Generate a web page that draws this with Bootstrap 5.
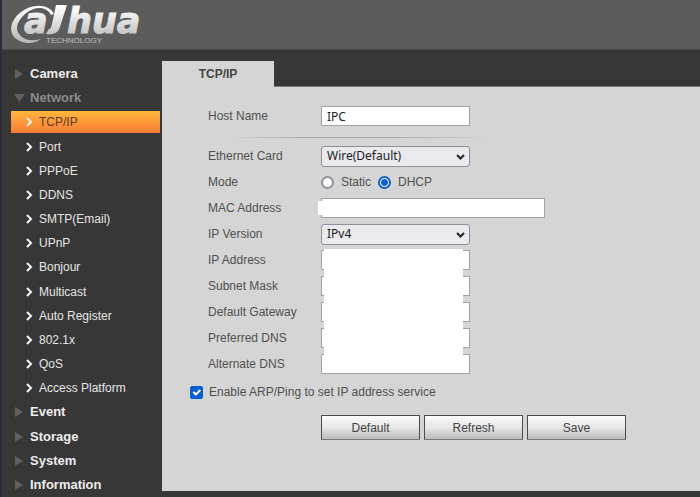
<!DOCTYPE html>
<html lang="en">
<head>
<meta charset="utf-8">
<meta name="viewport" content="width=device-width, initial-scale=1">
<title>TCP/IP</title>
<link href="https://cdn.jsdelivr.net/npm/bootstrap@5.3.0/dist/css/bootstrap.min.css" rel="stylesheet">
<style>
body{font-family:"Liberation Sans",Arial,sans-serif;font-size:12px;line-height:16px;color:#505050;background:#373737;border-left:2px solid #292d38}
.topbar{background:#5c5c5c;border-bottom:1px solid #484848;height:50px}
.brand-logo{width:138px;height:48px;margin-left:6px}
.side-menu{width:160px;padding:12px 2px 0 9px;display:grid;grid-auto-rows:1fr}
.side-menu a{display:flex;align-items:center;text-decoration:none;color:#e6e6e6;white-space:nowrap}
.side-menu .main-item{font-size:13px;font-weight:bold;padding-left:3px;gap:5px;color:#ededed}
.side-menu .main-item svg{width:11px;height:10px;flex:none}
.side-menu .open-item{color:#8b8b8b}
.side-menu .sub-item{padding-left:15px;gap:6px;margin:1px 0}
.side-menu .sub-item svg{width:7px;height:10px;flex:none;fill:none;stroke:#f4f4f4;stroke-width:2}
.side-menu .current-item{background:linear-gradient(#fdb73c,#fd9a39 50%,#fb7a33);color:#5b3a1c}
.tab-strip{padding-top:11px}
.page-tab{width:112px;height:25px;background:#d5d5d5;color:#444;font-weight:bold;border:0;padding:0}
.panel{background:linear-gradient(90deg,#d5d5d5 112px,#777 112px) top/100% 1px no-repeat #d5d5d5;margin-bottom:6px;padding:17px 0 0 28px}
.field-row{display:grid;grid-template-columns:113px 1fr;align-items:center;height:26px;padding-left:18px}
.field-row .form-control,.field-row .form-select{width:149px;height:20px;min-height:0;border-radius:0;border:1px solid #a2a2a2;font:12px/16px "Noto Sans",sans-serif;color:#222;padding:0 5px;background-color:#fff}
.field-row .form-select{height:21px;border-radius:3px;border-color:#8f8f9b;background-color:#e9e9ee;background-image:none;padding-right:20px}
.select-box svg{position:absolute;left:135px;top:8px;width:9px;height:6px;fill:none;stroke:#222;stroke-width:2;pointer-events:none}
.field-row .wide-field{width:224px}
.divider{height:1px;margin:8px 0 5px 42px;width:260px;background:linear-gradient(90deg,#d5d5d5,#aaa 25%,#aaa 65%,#d5d5d5)}
.mask-mac,.mask-ip{position:absolute;background:#fff}
.mask-mac{left:128px;top:6px;width:220px;height:14px}
.mask-ip{left:134px;top:2px;width:139px;bottom:4px}
.form-check-input{width:13px;height:13px;margin:0;flex:none}
.form-check-input:checked{background-color:#0a5fd0;border-color:#0a5fd0}
.form-check-input[type=radio]{border:2px solid #8f8f9b}
.form-check-input[type=radio]:checked{background-color:#fff;border-color:#0a5fd0;background-image:radial-gradient(#0a5fd0 0 3px,#fff 4px)}
.form-check-input[type=checkbox]{border-radius:2px;background-size:13px 13px}
.mode-options{gap:7px}
.service-row{height:30px;gap:6px}
.action-row{padding:8px 0 0 131px;gap:4px}
.action-row .btn{width:99px;height:25px;padding:0;font-size:12px;line-height:16px;color:#444;border:1px solid #4a4a4a;border-bottom-color:#777;border-radius:1px;background:linear-gradient(#fbfbfb,#e6e6e6 50%,#bcbcbc)}
</style>
<script defer src="https://cdn.jsdelivr.net/npm/bootstrap@5.3.0/dist/js/bootstrap.bundle.min.js"></script>
</head>
<body class="min-vh-100 d-flex flex-column">
<svg width="0" height="0" class="position-absolute" aria-hidden="true">
<symbol id="closed" viewBox="0 0 11 10"><path d="M1 0v10l8-5z" fill="#606060"/></symbol>
<symbol id="opened" viewBox="0 0 11 10"><path d="M0 1h11L5.500 9z" fill="#606060"/></symbol>
<symbol id="chev" viewBox="0 0 7 10"><path d="M1 1l4 4-4 4"/></symbol>
<symbol id="drop" viewBox="0 0 9 6"><path d="M1 1l3.500 3.500L8 1"/></symbol>
</svg>
<header class="topbar">
<svg class="brand-logo" viewBox="0 0 138 48" role="img" aria-label="alhua Technology">
<defs><linearGradient id="silver" x1="0" y1="0" x2="0" y2="48" gradientUnits="userSpaceOnUse"><stop offset=".15" stop-color="#fff"/><stop offset=".8" stop-color="#bdbdbd"/></linearGradient></defs>
<g fill="url(#silver)">
<path d="M46 14C41 4 25 3 13 12C1 21 0 35 10 40C16 44 26 44 33 39C26 41 19 41 14 37C6 31 8 22 17 14C27 6 38 6 43 15Z"/>
<g font-family="DejaVu Sans,sans-serif" font-size="35" font-weight="bold" font-style="italic" stroke="url(#silver)"><text x="16" y="33">a</text><text x="59" y="33">hua</text></g>
<path d="M48 5H59L52 27C50 33 46 35 38 34L41 29C43 29 43 27 44 24Z"/>
<text x="38" y="43" font-size="8">TECHNOLOGY</text>
</g>
</svg>
</header>
<div class="d-flex flex-grow-1">
<nav class="side-menu flex-shrink-0" aria-label="Main">
<a class="main-item" href="#"><svg><use href="#closed"/></svg>Camera</a>
<a class="main-item open-item" href="#"><svg><use href="#opened"/></svg>Network</a>
<a class="sub-item current-item" href="#" aria-current="page"><svg><use href="#chev"/></svg>TCP/IP</a>
<a class="sub-item" href="#"><svg><use href="#chev"/></svg>Port</a>
<a class="sub-item" href="#"><svg><use href="#chev"/></svg>PPPoE</a>
<a class="sub-item" href="#"><svg><use href="#chev"/></svg>DDNS</a>
<a class="sub-item" href="#"><svg><use href="#chev"/></svg>SMTP(Email)</a>
<a class="sub-item" href="#"><svg><use href="#chev"/></svg>UPnP</a>
<a class="sub-item" href="#"><svg><use href="#chev"/></svg>Bonjour</a>
<a class="sub-item" href="#"><svg><use href="#chev"/></svg>Multicast</a>
<a class="sub-item" href="#"><svg><use href="#chev"/></svg>Auto Register</a>
<a class="sub-item" href="#"><svg><use href="#chev"/></svg>802.1x</a>
<a class="sub-item" href="#"><svg><use href="#chev"/></svg>QoS</a>
<a class="sub-item" href="#"><svg><use href="#chev"/></svg>Access Platform</a>
<a class="main-item" href="#"><svg><use href="#closed"/></svg>Event</a>
<a class="main-item" href="#"><svg><use href="#closed"/></svg>Storage</a>
<a class="main-item" href="#"><svg><use href="#closed"/></svg>System</a>
<a class="main-item" href="#"><svg><use href="#closed"/></svg>Information</a>
</nav>
<main class="flex-grow-1 d-flex flex-column">
<div class="tab-strip d-flex"><button type="button" class="page-tab">TCP/IP</button></div>
<form class="panel flex-grow-1">
<div class="field-row"><label for="host">Host Name</label><input id="host" class="form-control" value="IPC"></div>
<div class="divider"></div>
<div class="field-row"><label for="card">Ethernet Card</label><div class="select-box position-relative"><select id="card" class="form-select"><option>Wire(Default)</option></select><svg><use href="#drop"/></svg></div></div>
<div class="field-row" role="radiogroup" aria-labelledby="mode"><span id="mode">Mode</span>
<div class="mode-options d-flex align-items-center"><input class="form-check-input" type="radio" name="mode" id="static"><label for="static">Static</label><input class="form-check-input" type="radio" name="mode" id="dhcp" checked><label for="dhcp">DHCP</label></div></div>
<div class="field-row position-relative"><label for="mac">MAC Address</label><input id="mac" class="form-control wide-field"><div class="mask-mac"></div></div>
<div class="field-row"><label for="ver">IP Version</label><div class="select-box position-relative"><select id="ver" class="form-select"><option>IPv4</option></select><svg><use href="#drop"/></svg></div></div>
<div class="position-relative">
<div class="field-row"><label for="ip">IP Address</label><input id="ip" class="form-control"></div>
<div class="field-row"><label for="subnet">Subnet Mask</label><input id="subnet" class="form-control"></div>
<div class="field-row"><label for="gateway">Default Gateway</label><input id="gateway" class="form-control"></div>
<div class="field-row"><label for="dns1">Preferred DNS</label><input id="dns1" class="form-control"></div>
<div class="field-row"><label for="dns2">Alternate DNS</label><input id="dns2" class="form-control"></div>
<div class="mask-ip"></div>
</div>
<div class="service-row d-flex align-items-center"><input class="form-check-input" type="checkbox" id="arp" checked><label for="arp">Enable ARP/Ping to set IP address service</label></div>
<div class="action-row d-flex"><button type="button" class="btn">Default</button><button type="button" class="btn">Refresh</button><button type="button" class="btn">Save</button></div>
</form>
</main>
</div>
</body>
</html>
